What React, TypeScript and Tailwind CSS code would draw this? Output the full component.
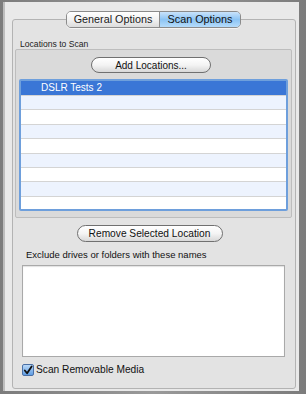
export default function App() {
  const rows = [0, 1, 2, 3, 4, 5, 6, 7];

  return (
    <div
      className="w-[306px] h-[394px] bg-gradient-to-r from-[#7c7c7c] via-[#9a9a9a] to-[#7c7c7c] pt-[2px] pl-[3px] pr-[7px] pb-[3px]"
      style={{ fontFamily: '"Liberation Sans", Arial, sans-serif' }}
    >
      <div className="h-full bg-[#e9e9e9] border-l-2 border-[#bdbdbd] pl-[7px] pr-[3px] pt-[9px] pb-[2px] flex flex-col">
        {/* Tabs */}
        <div className="flex justify-center relative z-10 pr-[1px]">
          <div className="flex h-[17px] rounded-[5px] border border-[#8b8b8b] overflow-hidden shadow-[0_1px_0_rgba(255,255,255,0.6)]">
            <div className="w-[93px] flex items-center justify-center text-[10.8px] text-[#1a1a1a] bg-gradient-to-b from-[#ffffff] via-[#f2f2f2] to-[#dcdcdc] border-r border-[#8b8b8b]">
              General Options
            </div>
            <div className="w-[80px] flex items-center justify-center text-[10.8px] text-[#111] bg-gradient-to-b from-[#c9e3fb] via-[#8cc4f4] to-[#b5dcfb]">
              Scan Options
            </div>
          </div>
        </div>

        {/* Tab box */}
        <div className="flex-1 -mt-[9px] border border-[#b3b3b3] rounded-[3px] bg-[#e3e3e3] flex flex-col pt-[19px] pb-[10px]">
          <div className="pl-[7px] text-[8.6px] leading-[10px] text-[#222]">Locations to Scan</div>

          <div className="ml-[2px] mr-[3px] h-[169px] border border-[#bdbdbd] rounded-[2px] bg-[#dadada] flex flex-col items-center pt-[7px] px-[3px]">
            <div className="w-[120px] h-[16px] shrink-0 rounded-full border border-[#707070] bg-gradient-to-b from-[#ffffff] via-[#f4f4f4] to-[#d8d8d8] flex items-center justify-center text-[10px] text-[#111] mr-[5px]">
              Add Locations...
            </div>

            <div className="mt-[6px] w-full h-[132px] shrink-0 border-2 border-[#6e9fdc] rounded-[2px] bg-white flex flex-col overflow-hidden">
              <div className="h-[14px] shrink-0 bg-[#3a76d6] text-white text-[10px] leading-[14px] pl-[20px]">
                DSLR Tests 2
              </div>
              {rows.map((i) => (
                <div
                  key={i}
                  className={`h-[14.4px] shrink-0 border-t border-[#d4d4d4] ${i % 2 === 0 ? "bg-[#edf3fe]" : "bg-white"}`}
                />
              ))}
            </div>
          </div>

          <div className="mt-[7px] flex justify-center pr-[9px]">
            <div className="w-[146px] h-[17px] rounded-full border border-[#707070] bg-gradient-to-b from-[#ffffff] via-[#f4f4f4] to-[#d8d8d8] flex items-center justify-center text-[10.2px] text-[#111]">
              Remove Selected Location
            </div>
          </div>

          <div className="mt-[7px] pl-[13px] text-[9.5px] leading-[12px] text-[#111]">
            Exclude drives or folders with these names
          </div>

          <div className="mt-[4px] ml-[9px] mr-[10px] h-[92px] border border-[#a9a9a9] bg-white shadow-[inset_0_1px_1px_rgba(0,0,0,0.12)]" />

          <div className="mt-[6px] ml-[9px] flex items-center gap-[2px]">
            <div className="w-[12px] h-[12px] rounded-[2px] border border-[#4a6fa5] bg-gradient-to-b from-[#b9d8f7] to-[#5f9de3] flex items-center justify-center">
              <svg width="11" height="11" viewBox="0 0 11 11">
                <path d="M2 5.5 L4.5 8.5 L9.5 1" fill="none" stroke="#111" strokeWidth="2" strokeLinecap="round" strokeLinejoin="round" />
              </svg>
            </div>
            <span className="text-[10.2px] text-[#111] leading-[14px]">Scan Removable Media</span>
          </div>
        </div>
      </div>
    </div>
  );
}
